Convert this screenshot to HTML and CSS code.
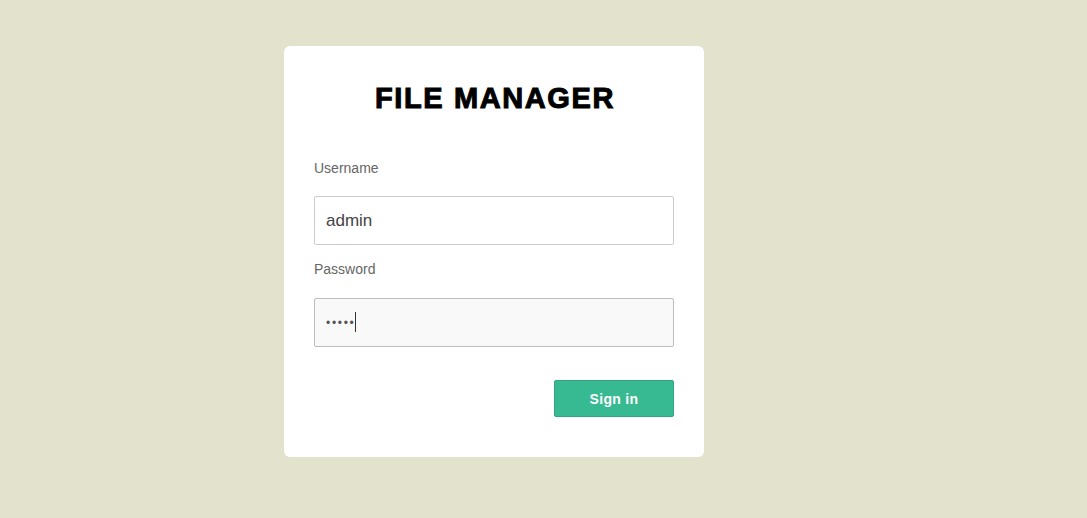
FILE: index.html
```html
<!DOCTYPE html>
<html lang="en">
<head>
<meta charset="utf-8">
<title>File Manager</title>
<link rel="stylesheet" href="styles.css">
</head>
<body>
<div class="card">
  <h1 class="title">FILE MANAGER</h1>
  <form class="form">
    <label class="label" for="u">Username</label>
    <input class="field" id="u" type="text" value="admin">
    <label class="label label-pw" for="p">Password</label>
    <div class="field-wrap">
      <input class="field field-active" id="p" type="password" value="admin">
      <span class="caret"></span>
    </div>
    <div class="actions">
      <button class="btn" type="button">Sign in</button>
    </div>
  </form>
</div>
</body>
</html>
```

FILE: styles.css
```css
html, body {
  margin: 0;
  padding: 0;
  background: #e3e2cd;
  font-family: "Liberation Sans", Arial, sans-serif;
}
body {
  padding-top: 46px;
}
.card {
  width: 420px;
  box-sizing: border-box;
  margin-left: 284px;
  background: #fff;
  border-radius: 6px;
  padding: 34px 30px 40px;
}
.title {
  margin: 0;
  font-size: 29px;
  line-height: 36px;
  font-weight: bold;
  letter-spacing: 1.6px;
  text-align: center;
  color: #000;
  -webkit-text-stroke: 1px #000;
  padding-left: 2px;
}
.form {
  margin: 42px 0 0;
  display: flex;
  flex-direction: column;
}
.label {
  font-size: 14px;
  line-height: 20px;
  color: #666;
  margin-bottom: 18px;
}
.label-pw {
  margin-top: 14px;
  margin-bottom: 19px;
}
.field {
  display: block;
  box-sizing: border-box;
  width: 360px;
  height: 49px;
  margin: 0;
  padding: 0 11px;
  border: 1px solid #cccccc;
  border-radius: 2px;
  background: #fff;
  font-family: "Liberation Sans", Arial, sans-serif;
  font-size: 17px;
  color: #444;
  outline: none;
}
.field-wrap {
  position: relative;
}
.field-active {
  background: #f9f9f9;
  border-color: #bcbcbc;
  font-size: 12px;
  letter-spacing: 1.7px;
  color: #555;
}
.caret {
  position: absolute;
  left: 41px;
  top: 14px;
  width: 1px;
  height: 20px;
  background: #333;
}
.actions {
  display: flex;
  justify-content: flex-end;
  margin-top: 33px;
}
.btn {
  width: 120px;
  height: 37px;
  box-sizing: border-box;
  border: 1px solid #2fa582;
  border-radius: 2px;
  background: #37b992;
  color: #fff;
  font-family: "Liberation Sans", Arial, sans-serif;
  font-weight: bold;
  font-size: 14px;
  letter-spacing: 0.3px;
  padding: 0;
  cursor: pointer;
}
```
